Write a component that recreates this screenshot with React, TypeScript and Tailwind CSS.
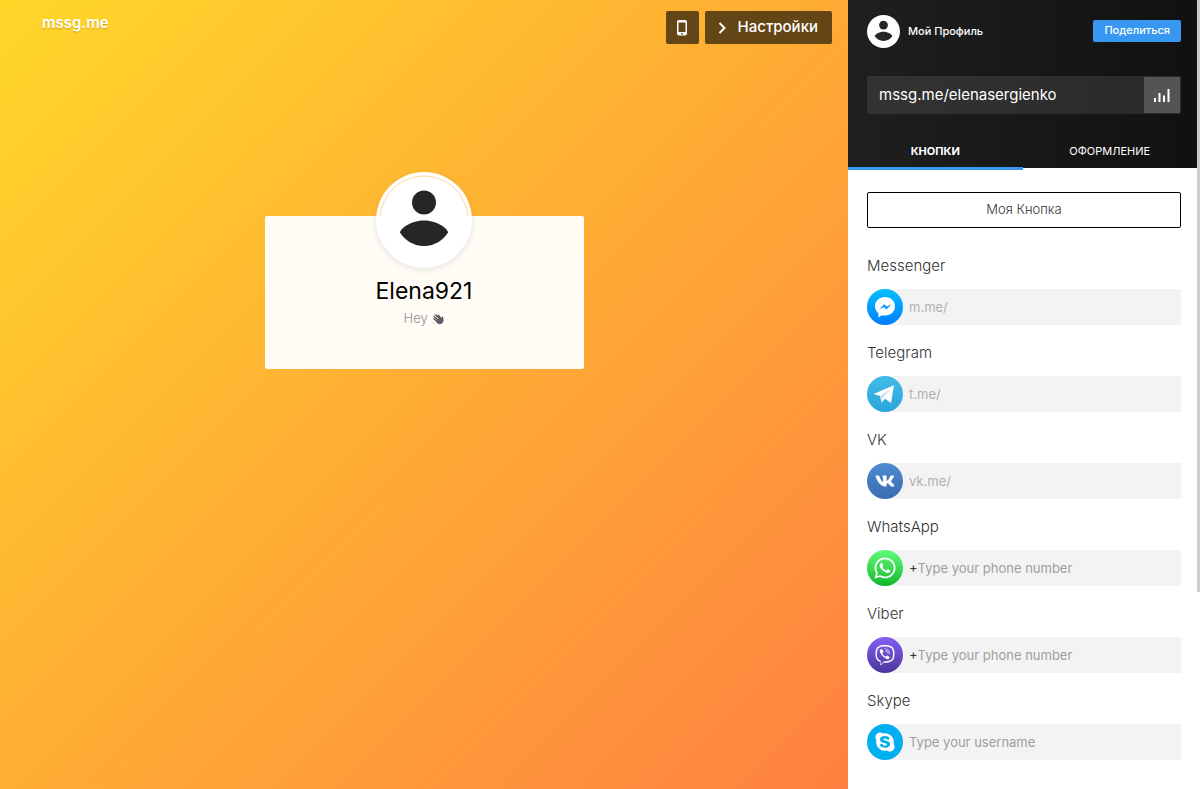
import React from 'react';
import { FaVk, FaWhatsapp, FaViber, FaSkype } from 'react-icons/fa';

const channels = [
  { id: 'messenger', label: 'Messenger', placeholder: 'm.me/', prefix: '', medium: true, color: 'from-[#00c0ff] to-[#007cff]' },
  { id: 'telegram', label: 'Telegram', placeholder: 't.me/', prefix: '', medium: true, color: 'from-[#41bce7] to-[#2aa4dc]' },
  { id: 'vk', label: 'VK', placeholder: 'vk.me/', prefix: '', medium: true, color: 'from-[#4d8bd0] to-[#3b6cb0]' },
  { id: 'whatsapp', label: 'WhatsApp', placeholder: 'Type your phone number', prefix: '+', medium: false, color: 'from-[#5ffb7b] to-[#09b826]' },
  { id: 'viber', label: 'Viber', placeholder: 'Type your phone number', prefix: '+', medium: false, color: 'from-[#8560f5] to-[#4b379b]' },
  { id: 'skype', label: 'Skype', placeholder: 'Type your username', prefix: '', medium: false, color: 'from-[#00aff0] to-[#00aff0]' },
];

const ChannelIcon = ({ id }: { id: string }) => {
  switch (id) {
    case 'messenger':
      return (
        <svg viewBox="0 0 36 36" className="size-9" aria-hidden="true">
          <path
            fill="#fff"
            d="M18 8C12.300 8 8 12 8 17.300c0 2.800 1.200 5.200 3.400 6.900V28.500l3.500-2.300c1 .3 2 .4 3.100.4 5.700 0 10-4 10-9.300S23.700 8 18 8z"
          />
          <path fill="#0a94ff" d="M12 20.500l5-5.200 2.700 2.300 4.800-2.300-5 5.100-2.700-2.400z" />
        </svg>
      );
    case 'telegram':
      return (
        <svg viewBox="0 0 36 36" className="size-9" aria-hidden="true">
          <path fill="#fff" d="M6.500 18L27 9.300 24 26.900l-6-4.200-3.500 4.100-1.500-6.900z" />
          <path fill="#c9deed" d="M13 19.900L24.500 12.500 15.600 21.600l-1.100 5.200z" />
        </svg>
      );
    case 'vk':
      return <FaVk className="size-5" />;
    case 'whatsapp':
      return <FaWhatsapp className="size-6" />;
    case 'viber':
      return <FaViber className="size-5" />;
    default:
      return <FaSkype className="size-[22px]" />;
  }
};

const Person = ({ className }: { className: string }) => (
  <svg viewBox="0 0 90 90" className={className} aria-hidden="true">
    <circle cx="45" cy="45" r="45" fill="#fff" />
    <circle cx="45" cy="27.500" r="12" fill="#262626" />
    <path fill="#262626" d="M21 57.500c1-5 12-12 24-12s23 7 24 12c-4 7-13 13.500-24 13.500S25 64.500 21 57.500z" />
  </svg>
);

const Preview = () => (
  <main className="flex min-w-0 flex-1 flex-col bg-linear-135 from-[#ffd728] via-[#ffac34] to-[#ff8040]">
    <div className="flex items-start justify-between pt-[11px] pr-4 pl-[42px]">
      <a href="#" className="text-[15px] leading-6 font-semibold text-white text-shadow-sm">
        mssg.me
      </a>
      <div className="flex gap-1.5">
        <button type="button" aria-label="Мобильный вид" className="flex h-[33px] w-[33px] items-center justify-center rounded-xs bg-[#644515] text-white">
          <svg viewBox="0 0 12 18" className="h-[18px] w-3" aria-hidden="true">
            <path
              fill="currentColor"
              fillRule="evenodd"
              d="M3 1h6a2 2 0 0 1 2 2v11.500a2 2 0 0 1-2 2H3a2 2 0 0 1-2-2V3a2 2 0 0 1 2-2zM2.500 3.500v9.500h7V3.500zM5 14.200v1.300h2v-1.300z"
            />
          </svg>
        </button>
        <button type="button" className="flex h-[33px] items-center rounded-xs bg-[#644515] pr-3.5 pl-[13px] text-[15px] font-medium text-white">
          <svg viewBox="0 0 8 12" className="mr-3 h-3 w-2" fill="none" stroke="currentColor" strokeWidth="2" aria-hidden="true">
            <path d="M1.500 1l5 5-5 5" />
          </svg>
          Настройки
        </button>
      </div>
    </div>

    <section className="mx-auto mt-[172px] flex h-[153px] w-[319px] flex-col items-center rounded-xs bg-[#fffcf5]">
      <div className="relative -mt-11 rounded-full bg-white p-[3px] shadow-[0_2px_6px_rgba(0,0,0,0.1)]">
        <Person className="size-[90px]" />
        {/* hairline where the background shows around the photo */}
        <svg viewBox="0 0 96 96" className="absolute inset-0 size-24" fill="none" aria-hidden="true">
          <path stroke="#ffd48a" strokeWidth=".9" d="M4 44A44.200 44.200 0 0 1 92 44" />
        </svg>
      </div>
      <h1 className="mt-2 text-[23px] leading-[30px] text-black">Elena921</h1>
      <p className="mt-0.5 text-[13px] leading-5 font-light text-[#8f8f8f]">
        Hey{' '}
        <svg viewBox="0 0 12 12" className="ml-px inline size-3" role="img" aria-label="👋">
          <g fill="none" stroke="#4e4a4a" strokeLinecap="round" strokeWidth="1.300">
            <path d="M2 5.800l4 3.800M2.200 3.400l4.500 4.600M3.900 2l4.300 4.600M6.200 2.200l3.200 3.800" />
            <path d="M10.500 4.200l.2 3.500" />
          </g>
          <path fill="#5c5d65" d="M5 7l3.800-3 2.400 2.600c.5 2.400-1 4.600-3.400 4.600-1.500 0-3-1.300-4-2.400z" />
          <path fill="none" stroke="#b9a36f" strokeWidth=".6" d="M1 3.600L2.800 1M.5 9l1.500 1.800" />
        </svg>
      </p>
    </section>
  </main>
);

const Sidebar = () => (
  <aside className="flex w-[352px] shrink-0 bg-white">
    <div className="min-w-0 flex-1">
      <header className="bg-linear-to-r from-[#1f1f1f] to-[#111]">
        <div className="flex items-center pt-[15px] pr-4 pl-[19px]">
          <Person className="size-[33px]" />
          <span className="ml-2 text-[11px] font-medium text-white">Мой Профиль</span>
          <button type="button" className="mb-0.5 ml-auto h-[22px] rounded-xs bg-[#3897f0] px-[11px] text-[11px] font-medium text-white">
            Поделиться
          </button>
        </div>

        <div className="mt-7 mr-4 ml-[19px] flex h-[38px] rounded-xs bg-linear-to-r from-[#333] to-[#292929] p-px pl-0">
          <input
            aria-label="Ссылка"
            defaultValue="mssg.me/elenasergienko"
            className="min-w-0 flex-1 bg-transparent pl-3 text-[15px] text-white outline-none"
          />
          <button type="button" aria-label="Статистика" className="flex w-9 items-center justify-center bg-[#545454] text-white">
            <svg viewBox="0 0 16 14" className="h-3.5 w-4" fill="currentColor" aria-hidden="true">
              <path d="M0 10h2v4H0zM4.500 5h2v9h-2zM9 7.500h2V14H9zM13.500 1h2v13h-2z" />
            </svg>
          </button>
        </div>

        <div role="tablist" className="mt-[19px] grid h-[35px] grid-cols-2 text-[11px] text-white">
          <button type="button" role="tab" aria-selected="true" className="-mb-0.5 border-b-[3px] border-[#3897f0] pt-0.5 font-bold">
            КНОПКИ
          </button>
          <button type="button" role="tab" aria-selected="false" className="pt-0.5">
            ОФОРМЛЕНИЕ
          </button>
        </div>
      </header>

      <div className="pt-6 pr-4 pb-7 pl-[19px]">
        <button type="button" className="h-9 w-full rounded-xs border border-black text-[13px] font-light text-[#333]">
          Моя Кнопка
        </button>

        <div className="mt-[26px] flex flex-col gap-4">
          {channels.map((channel) => (
            <div key={channel.id}>
              <label htmlFor={channel.id} className="block text-[15px] leading-6 font-light text-[#333]">
                {channel.label}
              </label>
              <div className="mt-[11px] flex h-9 items-center rounded-l-full rounded-r-xs bg-[#f3f3f3]">
                <div className={`flex size-9 shrink-0 items-center justify-center rounded-full bg-linear-to-b text-white ${channel.color}`}>
                  <ChannelIcon id={channel.id} />
                </div>
                {channel.prefix && <span className="ml-1.5 text-[13px] text-[#333]">{channel.prefix}</span>}
                <input
                  id={channel.id}
                  placeholder={channel.placeholder}
                  className={`h-full min-w-0 flex-1 bg-transparent text-[13px] outline-none ${
                    channel.prefix ? '' : 'pl-1.5'
                  } ${channel.medium ? 'placeholder:text-[#b0b0b0]' : 'placeholder:text-[#9b9fa0]'}`}
                />
              </div>
            </div>
          ))}
        </div>
      </div>
    </div>
    {/* scroll thumb */}
    <div className="h-[75vh] w-[3px] bg-[#cdcdcd]" />
  </aside>
);

export default function App() {
  return (
    <div className="flex h-screen overflow-hidden font-[Inter,sans-serif]">
      <Preview />
      <Sidebar />
    </div>
  );
}
